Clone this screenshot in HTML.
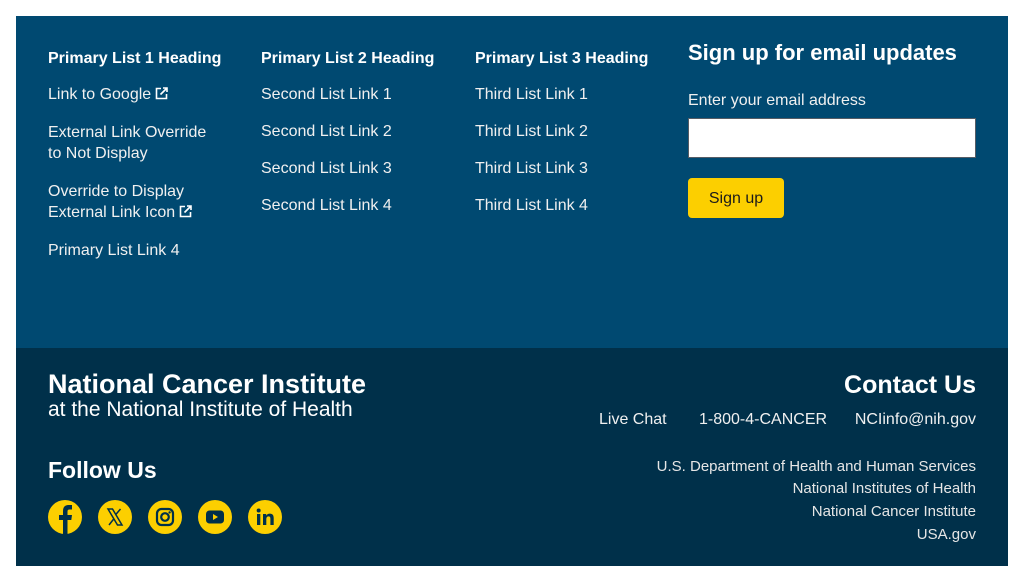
<!DOCTYPE html>
<html><head><meta charset="utf-8">
<style>
*{margin:0;padding:0;box-sizing:border-box}
html,body{width:1024px;height:582px;background:#fff;overflow:hidden;font-family:"Liberation Sans",sans-serif}
.top{position:absolute;left:16px;top:16px;width:992px;height:332px;background:#004971}
.bot{position:absolute;left:16px;top:348px;width:992px;height:218px;background:#00304a}
.t{position:absolute;color:#fff;white-space:nowrap;line-height:21px;font-size:16px}
.h{font-weight:bold}
.l{color:#f0f0f0}
.ext{display:inline-block;vertical-align:-1px;margin-left:4px}
.r{right:48px;text-align:right}
.s{font-size:15px;color:#e6e6e6}
.ic{position:absolute;top:500px;width:34px;height:34px;border-radius:50%;background:#fccf00}
.ic svg{position:absolute;left:0;top:0}
</style></head><body>
<div class="top"></div>
<div class="bot"></div>

<div class="t h" style="left:48px;top:48px">Primary List 1 Heading</div>
<div class="t l" style="left:48px;top:84px">Link to Google<svg class="ext" width="13" height="13" viewBox="0 0 13 13"><path d="M6 1.5H1.5v10h10V7" fill="none" stroke="#fff" stroke-width="1.6"/><path d="M8 1h4v4M12 1L5.5 7.5" fill="none" stroke="#fff" stroke-width="1.6"/></svg></div>
<div class="t l" style="left:48px;top:122px">External Link Override<br>to Not Display</div>
<div class="t l" style="left:48px;top:181px">Override to Display<br>External Link Icon<svg class="ext" width="13" height="13" viewBox="0 0 13 13"><path d="M6 1.5H1.5v10h10V7" fill="none" stroke="#fff" stroke-width="1.6"/><path d="M8 1h4v4M12 1L5.5 7.5" fill="none" stroke="#fff" stroke-width="1.6"/></svg></div>
<div class="t l" style="left:48px;top:240px">Primary List Link 4</div>

<div class="t h" style="left:261px;top:48px">Primary List 2 Heading</div>
<div class="t l" style="left:261px;top:84px">Second List Link 1</div>
<div class="t l" style="left:261px;top:121px">Second List Link 2</div>
<div class="t l" style="left:261px;top:158px">Second List Link 3</div>
<div class="t l" style="left:261px;top:195px">Second List Link 4</div>

<div class="t h" style="left:475px;top:48px">Primary List 3 Heading</div>
<div class="t l" style="left:475px;top:84px">Third List Link 1</div>
<div class="t l" style="left:475px;top:121px">Third List Link 2</div>
<div class="t l" style="left:475px;top:158px">Third List Link 3</div>
<div class="t l" style="left:475px;top:195px">Third List Link 4</div>

<div class="t h" style="left:688px;top:39px;font-size:22px;line-height:28px">Sign up for email updates</div>
<div class="t l" style="left:688px;top:90px">Enter your email address</div>
<div style="position:absolute;left:688px;top:118px;width:288px;height:40px;background:#fff;border:1px solid #565c65"></div>
<div style="position:absolute;left:688px;top:178px;width:96px;height:40px;background:#fccf00;border-radius:4px;color:#1b1b1b;font-size:16px;line-height:42px;text-align:center">Sign up</div>

<div class="t h" style="left:48px;top:369px;font-size:27px;line-height:30px">National Cancer Institute</div>
<div class="t" style="left:48px;top:398px;font-size:21px;line-height:24px">at the National Institute of Health</div>
<div class="t h" style="left:48px;top:456px;font-size:23px;line-height:28px">Follow Us</div>

<div class="ic" style="left:48px"><svg width="34" height="34" viewBox="0 0 34 34"><path d="M15 34V20h-4v-5h4v-4c0-4 2-6 6-6h3v4.5h-2.5c-1.5 0-2 .8-2 2V15h4.5l-.7 5H19.5v14z" fill="#00304a"/></svg></div>
<div class="ic" style="left:98px"><svg width="34" height="34" viewBox="0 0 34 34"><path d="M10 9h4.5l9.5 16h-4.5zM22.5 9l-4.8 5.6M16.2 18.4L11 25" fill="none" stroke="#00304a" stroke-width="1.5"/></svg></div>
<div class="ic" style="left:148px"><svg width="34" height="34" viewBox="0 0 34 34"><rect x="9" y="9" width="16" height="16" rx="4.5" fill="none" stroke="#00304a" stroke-width="2.2"/><circle cx="17" cy="17" r="3.8" fill="none" stroke="#00304a" stroke-width="2.2"/><circle cx="21.6" cy="12.4" r="1.2" fill="#00304a"/></svg></div>
<div class="ic" style="left:198px"><svg width="34" height="34" viewBox="0 0 34 34"><rect x="8" y="10.5" width="18" height="13" rx="3.5" fill="#00304a"/><path d="M15 14v6l5-3z" fill="#fccf00"/></svg></div>
<div class="ic" style="left:248px"><svg width="34" height="34" viewBox="0 0 34 34"><rect x="9" y="14" width="3.3" height="11" fill="#00304a"/><circle cx="10.65" cy="10.5" r="2" fill="#00304a"/><path d="M15 14h3.2v1.6c.8-1.3 2-2 3.7-2 2.8 0 3.8 1.8 3.8 4.6V25h-3.3v-6.2c0-1.5-.5-2.4-1.8-2.4s-2.3.9-2.3 2.6V25H15z" fill="#00304a"/></svg></div>

<div class="t h r" style="top:370px;font-size:25px;line-height:30px">Contact Us</div>
<div class="t l" style="left:599px;top:409px">Live Chat</div>
<div class="t l" style="left:699px;top:409px">1-800-4-CANCER</div>
<div class="t l r" style="top:409px">NCIinfo@nih.gov</div>
<div class="t s r" style="top:456px">U.S. Department of Health and Human Services</div>
<div class="t s r" style="top:478px">National Institutes of Health</div>
<div class="t s r" style="top:501px">National Cancer Institute</div>
<div class="t s r" style="top:524px">USA.gov</div>
</body></html>
